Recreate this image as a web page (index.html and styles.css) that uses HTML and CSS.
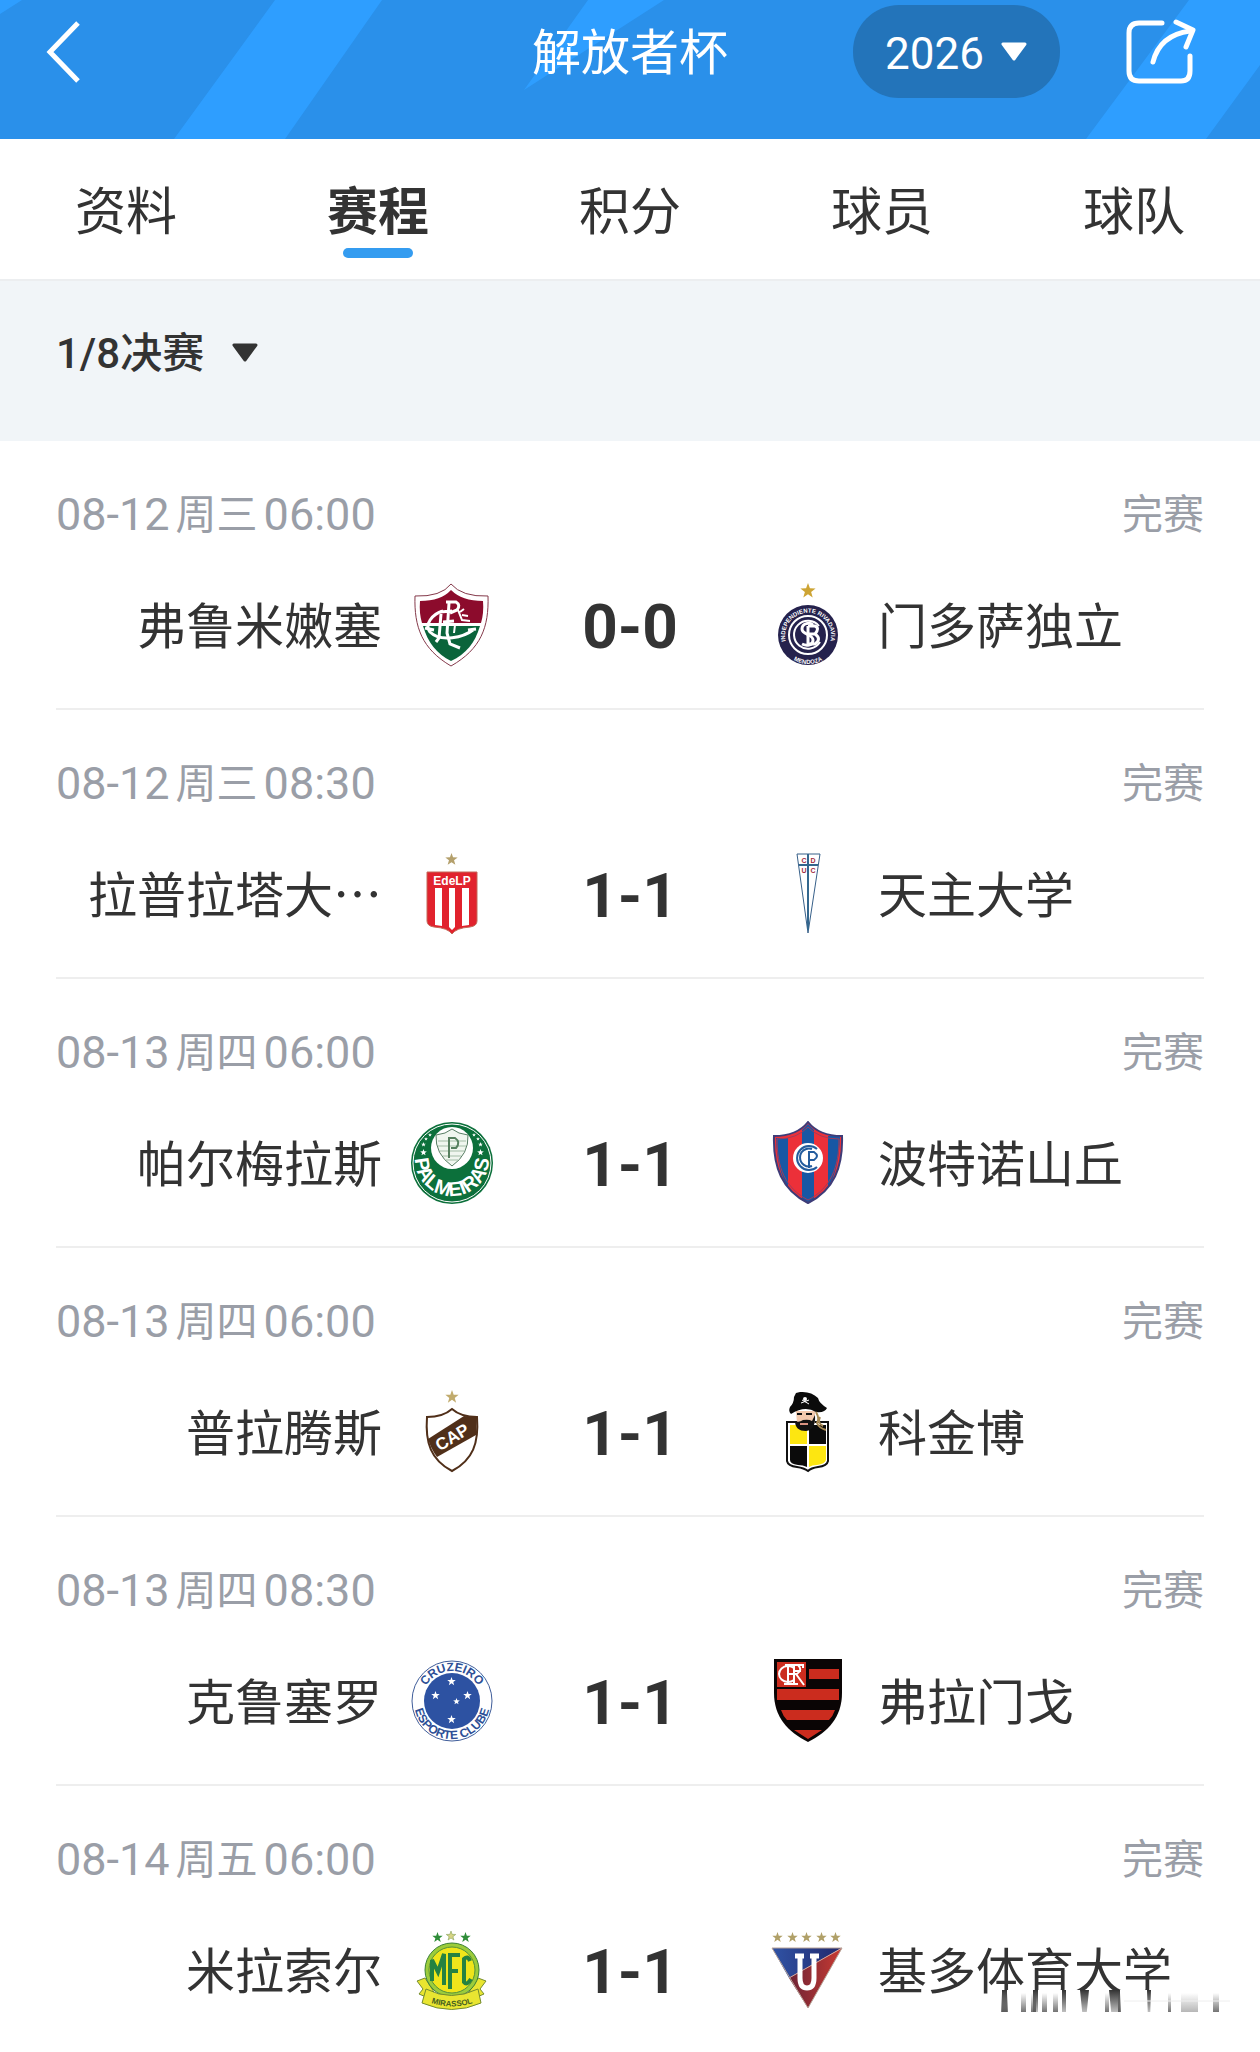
FILE: index.html
```
<!DOCTYPE html>
<html lang="zh-CN">
<head>
    <meta charset="UTF-8" />
    <meta name="viewport" content="width=device-width, initial-scale=1" />
    <title>解放者杯</title>
    <link rel="stylesheet" href="styles.css">
</head>
<body>
    <svg class="defs" aria-hidden="true">
        <symbol id="star" viewBox="-10 -10 20 20">
            <path d="M0-10 2.4-3.3 9.5-3.1 3.9 1.3 5.9 8.1 0 4.1-5.9 8.1-3.9 1.3-9.5-3.1-2.4-3.3Z" />
        </symbol>
        <symbol id="caret" viewBox="0 0 28 20">
            <path d="M3 2H25L14 17Z" fill="currentColor" stroke="currentColor" stroke-width="3" stroke-linejoin="round" />
        </symbol>
    </svg>

    <header class="topbar">
        <svg class="topbar-bg" viewBox="0 0 1260 139" preserveAspectRatio="none" aria-hidden="true">
            <path d="M0 0H22L0 14ZM275 0H382L285 139H174ZM588 0H664L524 90ZM1189 0H1260V65L1206 139H1086Z" fill="#2e9eff" />
        </svg>
        <a class="back" href="#" aria-label="返回">
            <svg width="36" height="66" viewBox="0 0 36 66"><path d="M32 4 4 33 32 62" fill="none" stroke="#fff" stroke-width="5" /></svg>
        </a>
        <h1>解放者杯</h1>
        <div class="actions">
            <div class="year">
                <select aria-label="年份">
                    <option>2026</option>
                    <option>2025</option>
                </select>
                <svg class="caret"><use href="#caret" /></svg>
            </div>
            <button class="share" type="button" aria-label="分享">
                <svg width="70" height="66" viewBox="0 0 70 66" fill="none" stroke="#fff" stroke-width="5" stroke-linecap="round" stroke-linejoin="round">
                    <path d="M36 4H13Q3 4 3 14V52Q3 62 13 62H55Q64 62 64 52V37" />
                    <path d="M27 43C31 27 42 15 64 12" />
                    <path d="M50 3 67 11 60 28" />
                </svg>
            </button>
        </div>
    </header>

    <nav class="tabs">
        <a href="#">资料</a>
        <a href="#" class="active">赛程</a>
        <a href="#">积分</a>
        <a href="#">球员</a>
        <a href="#">球队</a>
    </nav>

    <div class="filter">
        <select aria-label="阶段">
            <option>1/8决赛</option>
        </select>
        <svg class="caret"><use href="#caret" /></svg>
    </div>

    <main class="matches">
        <section class="match">
            <div class="meta"><span class="time">08-12<span class="day">周三</span>06:00</span><span>完赛</span></div>
            <div class="teams">
                <span class="name home">弗鲁米嫩塞</span>
                <svg class="logo" viewBox="0 0 84 84">
                    <path d="M41 1Q31 14 5 13C4 44 12 66 41 83 71 66 79 44 78 13Q52 14 41 1Z" fill="#fff" stroke="#84394a" />
                    <path d="M41 7Q31 18 10 18 9 30 12 40H71Q74 30 73 18 52 18 41 7Z" fill="#8c0b2c" />
                    <path d="M13 43H70C65 60 56 71 41 78 27 71 18 60 13 43Z" fill="#0a643b" />
                    <g fill="none" stroke="#fff" stroke-width="3">
                        <path d="M33 28C22 31 14 42 20 49 31 60 54 54 63 47M15 45 24 47M58 47 66 46" />
                        <path d="M36 19H46Q51 22 47 27L40 30M39 20 37 50 40 61 50 65M30 29 42 28M33 39 44 38M31 31 29 55 26 59" />
                        <path d="M48 27 52 37 60 38M50 29 54 26M52 32 58 33M45 42 44 50" stroke-width="2" />
                    </g>
                </svg>
                <strong class="score">0-0</strong>
                <svg class="logo" viewBox="0 0 84 84">
                    <use href="#star" x="34" y="0" width="16" height="16" fill="#cda434" />
                    <circle cx="42" cy="52" r="30" fill="#25224d" />
                    <g fill="none" stroke="#fff" stroke-width="2">
                        <circle cx="42" cy="52" r="19" />
                        <path d="M54 59A14 14 0 1 1 53 43" />
                        <path d="M47 42C44 39 36 40 36 46S47 51 47 57 40 63 36 61" stroke-width="3" />
                        <path d="M42 43V62M42 43H49Q54 45 49 51H42M49 51Q56 56 49 61H42" stroke-width="3" />
                    </g>
                    <path id="ind" d="M24 67A23 23 0 1 1 60 67" fill="none" />
                    <path id="men" d="M19 69A28 28 0 0 0 65 69" fill="none" />
                    <text class="crest-text" font-size="6" fill="#fff"><textPath href="#ind" startOffset="50%" text-anchor="middle">INDEPENDIENTE RIVADAVIA</textPath></text>
                    <text class="crest-text" font-size="6" fill="#fff"><textPath href="#men" startOffset="50%" text-anchor="middle">MENDOZA</textPath></text>
                </svg>
                <span class="name">门多萨独立</span>
            </div>
        </section>

        <section class="match">
            <div class="meta"><span class="time">08-12<span class="day">周三</span>08:30</span><span>完赛</span></div>
            <div class="teams">
                <span class="name home">拉普拉塔大…</span>
                <svg class="logo" viewBox="0 0 84 84">
                    <use href="#star" x="35" y="1" width="13" height="13" fill="#b4a06c" />
                    <path d="M17 20H67V69Q67 74 60 75 46 76 42 82 38 76 24 75 17 74 17 69Z" fill="#e1222d" stroke="#c4695a" />
                    <path d="M25 36H32V74L25 73ZM39 36H45V75L42 78 39 75ZM52 36H59V73L52 74Z" fill="#fff" />
                    <text class="crest-text" x="42" y="33" font-size="12" fill="#fff" text-anchor="middle">EdeLP</text>
                </svg>
                <strong class="score">1-1</strong>
                <svg class="logo" viewBox="0 0 84 84">
                    <path d="M31 2H54L42 81Z" fill="#fff" stroke="#376089" />
                    <path d="M42 2V78M33 13H52" fill="none" stroke="#33678e" stroke-width="2" />
                    <g class="crest-text" font-size="7" fill="#a12c41" text-anchor="middle">
                        <text x="38" y="11">C</text>
                        <text x="47" y="11">D</text>
                        <text x="38" y="21">U</text>
                        <text x="47" y="21">C</text>
                    </g>
                </svg>
                <span class="name">天主大学</span>
            </div>
        </section>

        <section class="match">
            <div class="meta"><span class="time">08-13<span class="day">周四</span>06:00</span><span>完赛</span></div>
            <div class="teams">
                <span class="name home">帕尔梅拉斯</span>
                <svg class="logo" viewBox="0 0 84 84">
                    <circle cx="42" cy="42" r="41" fill="#0c703b" />
                    <circle cx="42" cy="42" r="39" fill="none" stroke="#fff" />
                    <circle cx="42" cy="27" r="21" fill="#fff" />
                    <path d="M42 8Q36 13 26 14 25 33 42 45 59 33 58 14 48 13 42 8Z" fill="#f0f6ef" stroke="#577d63" />
                    <path d="M28 20H56M28 25H56M30 30H54M33 35H51M36 39H48" stroke="#a3bca6" />
                    <path d="M39 37V17H45Q51 21 46 27H41" fill="none" stroke="#56805f" stroke-width="2" />
                    <g fill="#fff">
                        <use href="#star" x="10" y="28" width="7" height="7" />
                        <use href="#star" x="11" y="21" width="5" height="5" />
                        <use href="#star" x="14" y="16" width="4" height="4" />
                        <use href="#star" x="18" y="12" width="4" height="4" />
                        <use href="#star" x="67" y="28" width="7" height="7" />
                        <use href="#star" x="68" y="21" width="5" height="5" />
                        <use href="#star" x="66" y="16" width="4" height="4" />
                        <use href="#star" x="62" y="12" width="4" height="4" />
                    </g>
                    <path id="pal" d="M5 38A37 37 0 1 0 79 38" fill="none" />
                    <text class="crest-text" font-size="20" fill="#fff"><textPath href="#pal" startOffset="50%" text-anchor="middle">PALMEIRAS</textPath></text>
                </svg>
                <strong class="score">1-1</strong>
                <svg class="logo" viewBox="0 0 84 84">
                    <path d="M42 1Q31 15 8 15C7 46 16 69 42 82 68 69 77 46 76 15Q53 15 42 1Z" fill="#ec3039" />
                    <path d="M10 17H22V66Q11 50 10 17ZM36 9 42 3 48 9V79L42 82 36 79ZM62 15H74Q73 50 62 66Z" fill="#1857a4" />
                    <path d="M42 1Q31 15 8 15C7 46 16 69 42 82 68 69 77 46 76 15Q53 15 42 1Z" fill="none" stroke="#3e3c78" stroke-width="2" />
                    <path d="M42 6Q31 18 11 18C11 46 19 67 42 79 65 67 73 46 73 18Q53 18 42 6Z" fill="none" stroke="#a13b5b" />
                    <circle cx="42" cy="37" r="15" fill="#fff" />
                    <g fill="none" stroke="#235c9d" stroke-width="2">
                        <path d="M51 28A12 12 0 1 0 51 46M46 28A9 9 0 1 0 46 45" />
                        <path d="M43 47V31H48Q54 35 48 39H43" />
                    </g>
                </svg>
                <span class="name">波特诺山丘</span>
            </div>
        </section>

        <section class="match">
            <div class="meta"><span class="time">08-13<span class="day">周四</span>06:00</span><span>完赛</span></div>
            <div class="teams">
                <span class="name home">普拉腾斯</span>
                <svg class="logo" viewBox="0 0 84 84">
                    <use href="#star" x="35" y="0" width="14" height="14" fill="#c1ab6d" />
                    <path d="M42 19Q33 27 17 27C15 53 21 70 42 81 63 70 69 53 67 27Q51 27 42 19Z" fill="#fff" />
                    <path d="M18 49 54 26 67 27 66 45 27 67Q21 59 18 49Z" fill="#502f19" />
                    <path d="M42 19Q33 27 17 27C15 53 21 70 42 81 63 70 69 53 67 27Q51 27 42 19Z" fill="none" stroke="#502f19" stroke-width="2" />
                    <text class="crest-text" x="42" y="53" font-size="17" fill="#fff" text-anchor="middle" transform="rotate(-31 42 47)">CAP</text>
                </svg>
                <strong class="score">1-1</strong>
                <svg class="logo" viewBox="0 0 84 84">
                    <path d="M21 32H62V71Q61 76 52 77 45 78 42 81 38 78 31 77 22 76 21 71Z" fill="#fff" stroke="#111" stroke-width="2" />
                    <path d="M24 35H41V54H24ZM43 56H60V70Q59 74 51 75 46 75 43 77Z" fill="#fde611" />
                    <path d="M43 35H60V54H43ZM24 56H41V77Q37 75 32 75 24 74 24 70Z" fill="#0b0b0b" />
                    <path d="M30 21H49V33L41 37 31 33Z" fill="#f3c9ad" />
                    <path d="M29 31Q33 33 37 30 43 29 46 31L49 25Q50 40 40 41 29 41 29 31Z" fill="#111" />
                    <path d="M31 24H36M40 24H46" stroke="#111" stroke-width="2" />
                    <path d="M34 34H42" stroke="#d99281" stroke-width="2" />
                    <path d="M30 3 34 2Q45 1 52 8 53 13 61 18 59 23 50 22 39 15 25 24 22 21 24 17 28 13 28 7Z" fill="#0b0b0b" />
                    <path d="M50 22Q54 29 51 33 53 38 60 40M54 27Q51 33 57 36" fill="none" stroke="#a88a55" stroke-width="2" />
                    <circle cx="39" cy="9" r="2" fill="#fff" />
                    <path d="M35 13 43 10M36 10 43 14" stroke="#fff" />
                </svg>
                <span class="name">科金博</span>
            </div>
        </section>

        <section class="match">
            <div class="meta"><span class="time">08-13<span class="day">周四</span>08:30</span><span>完赛</span></div>
            <div class="teams">
                <span class="name home">克鲁塞罗</span>
                <svg class="logo" viewBox="0 0 84 84">
                    <circle cx="42" cy="42" r="40" fill="#fff" stroke="#3f5d9a" />
                    <circle cx="42" cy="42" r="28" fill="#2d52a2" />
                    <g fill="#fff">
                        <use href="#star" x="37" y="18" width="9" height="9" />
                        <use href="#star" x="21" y="32" width="9" height="9" />
                        <use href="#star" x="53" y="32" width="9" height="9" />
                        <use href="#star" x="43" y="39" width="7" height="7" />
                        <use href="#star" x="37" y="56" width="9" height="9" />
                    </g>
                    <path id="cru" d="M12 42A30 30 0 0 1 72 42" fill="none" />
                    <path id="esp" d="M6 30A38 38 0 1 0 78 30" fill="none" />
                    <text class="crest-text" font-size="12" fill="#2d4f96"><textPath href="#cru" startOffset="50%" text-anchor="middle">CRUZEIRO</textPath></text>
                    <text class="crest-text" font-size="12" fill="#2d4f96"><textPath href="#esp" startOffset="50%" text-anchor="middle">ESPORTE CLUBE</textPath></text>
                </svg>
                <strong class="score">1-1</strong>
                <svg class="logo" viewBox="0 0 84 84">
                    <path d="M8 0H76V34C76 58 62 73 42 83 22 73 8 58 8 34Z" fill="#0a0505" />
                    <path d="M11 3H40V28H11ZM43 10H73V20H43ZM11 30H73V41H11ZM15 51H69Q67 57 63 61H21Q17 57 15 51ZM28 71H56L42 80Z" fill="#cb2c1e" />
                    <g fill="none" stroke="#fff" stroke-width="2">
                        <path d="M28 9A9 8 0 1 0 28 21" />
                        <path d="M22 6V25M19 6H32Q37 11 31 15H22M30 15 38 26M28 6V26M37 9V6H28M28 12H35M18 25H32" />
                    </g>
                </svg>
                <span class="name">弗拉门戈</span>
            </div>
        </section>

        <section class="match">
            <div class="meta"><span class="time">08-14<span class="day">周五</span>06:00</span><span>完赛</span></div>
            <div class="teams">
                <span class="name home">米拉索尔</span>
                <svg class="logo" viewBox="0 0 84 84">
                    <use href="#star" x="22" y="4" width="11" height="11" fill="#2f8d39" />
                    <use href="#star" x="36" y="3" width="10" height="10" fill="#d6d484" stroke="#74964b" />
                    <use href="#star" x="50" y="4" width="11" height="11" fill="#2f8d39" />
                    <path d="M7 53 15 50 24 64 16 69 9 66 13 61ZM76 53 68 50 59 64 67 69 74 66 70 61Z" fill="#e9e531" stroke="#748c2e" />
                    <circle cx="42" cy="42" r="27" fill="#9ccc3b" stroke="#3b8136" />
                    <circle cx="42" cy="42" r="23" fill="#efe51b" stroke="#54923a" />
                    <path d="M16 61Q41 74 68 61L71 75Q42 88 12 75Z" fill="#e9e531" stroke="#748c2e" />
                    <g fill="none" stroke="#258241" stroke-width="4">
                        <path d="M22 53V32L28 44 34 26V57M40 61V27H50M40 43H48M60 33Q58 27 54 31V54Q57 58 61 51" />
                    </g>
                    <path id="mir" d="M14 72Q42 85 70 72" fill="none" />
                    <text class="crest-text" font-size="8" fill="#455f20"><textPath href="#mir" startOffset="50%" text-anchor="middle">MIRASSOL</textPath></text>
                </svg>
                <strong class="score">1-1</strong>
                <svg class="logo" viewBox="0 0 84 84">
                    <g fill="#b0a068">
                        <use href="#star" x="6" y="4" width="11" height="11" />
                        <use href="#star" x="21" y="4" width="11" height="11" />
                        <use href="#star" x="35" y="4" width="11" height="11" />
                        <use href="#star" x="50" y="4" width="11" height="11" />
                        <use href="#star" x="64" y="4" width="11" height="11" />
                    </g>
                    <linearGradient id="ldu-blue"><stop stop-color="#3053a5" /><stop offset="1" stop-color="#21286c" /></linearGradient>
                    <linearGradient id="ldu-red"><stop stop-color="#6d2335" /><stop offset="1" stop-color="#c93a32" /></linearGradient>
                    <path d="M6 20H76L23 50Z" fill="url(#ldu-blue)" />
                    <path d="M76 20 42 80 23 50Z" fill="url(#ldu-red)" />
                    <path d="M23 50 76 20" stroke="#d3a59a" />
                    <path d="M6 20H76L42 80Z" fill="none" stroke="#b6a196" />
                    <path d="M34 29V50Q34 60 41 60T48 50V29M29 28H38M44 28H53" fill="none" stroke="#fff" stroke-width="5" />
                </svg>
                <span class="name">基多体育大学</span>
            </div>
            <svg class="mark" viewBox="0 0 236 44" aria-hidden="true">
                <linearGradient id="fade-down" x2="0" y2="1"><stop stop-color="#333" /><stop offset="1" stop-color="#333" stop-opacity="0" /></linearGradient>
                <linearGradient id="fade-up" x2="0" y2="1"><stop stop-color="#222" stop-opacity="0" /><stop offset="1" stop-color="#222" /></linearGradient>
                <path d="M0 0H236V44H0Z" fill="#fff" />
                <path d="M2 0H7V32H2ZM33 0H38V32H33ZM62 0H66V30H62ZM80 0H89L86 30H83ZM109 0H120V30H112ZM147 0H151L150 30H148Z" fill="url(#fade-down)" />
                <path d="M1 3H8V32H1ZM21 3H26V32H21ZM31 3H36V32H31ZM42 3H47V32H42ZM53 3H58V32H53ZM105 3H109V32H105ZM118 3H121V33H118ZM168 3H171V32H168ZM213 3H219V32H213Z" fill="url(#fade-up)" />
                <path d="M181 3H198V32H181Z" fill="url(#fade-up)" opacity="0.5" />
                <path d="M73 32Q86 42 98 32" fill="none" stroke="#111" stroke-width="2" />
                <path d="M124 11H230M124 29H230" stroke="#eee" />
            </svg>
        </section>
    </main>
</body>
</html>
```
FILE: styles.css
```
/* Reset and base */
* {
    box-sizing: border-box;
}
body {
    margin: 0;
    background: #fff;
    color: #333;
    font-family: Roboto, 'Noto Sans CJK SC', sans-serif;
    font-size: 40px;
}
a {
    color: inherit;
    text-decoration: none;
}
select,
button {
    appearance: none;
    border: none;
    background: none;
    margin: 0;
    padding: 0;
    color: inherit;
    font-family: inherit;
}
svg {
    display: block;
}
.defs {
    position: absolute;
    width: 0;
    height: 0;
}
.caret {
    width: 28px;
    height: 20px;
    pointer-events: none;
}

/* Top bar */
.topbar {
    position: relative;
    display: grid;
    grid-template-columns: 1fr auto 1fr;
    align-items: center;
    padding: 5px 64px 41px;
    background: #2a90ea;
    color: #fff;
}
.topbar-bg {
    position: absolute;
    inset: 0;
    width: 100%;
    height: 100%;
}
.back,
.topbar h1,
.actions {
    position: relative;
}
.back {
    margin-left: -18px;
}
.topbar h1 {
    margin: 0;
    padding-top: 4px;
    font-size: 49px;
    font-weight: 400;
    line-height: 60px;
}
.actions {
    display: flex;
    align-items: center;
    justify-content: flex-end;
    gap: 66px;
}
.year {
    position: relative;
}
.year select {
    height: 93px;
    padding: 4px 76px 0 32px;
    border-radius: 46px;
    background: #2374ba;
    font-size: 44px;
}
.year .caret {
    position: absolute;
    right: 32px;
    top: 37px;
}

/* Tabs */
.tabs {
    display: flex;
    border-bottom: 2px solid #eceef0;
}
.tabs a {
    flex: 1;
    display: flex;
    flex-direction: column;
    align-items: center;
    padding-top: 39px;
    height: 140px;
    font-size: 51px;
    line-height: 70px;
}
.tabs .active {
    font-weight: 700;
}
.tabs .active::after {
    content: "";
    width: 70px;
    height: 10px;
    border-radius: 5px;
    background: #349cf0;
}

/* Stage filter */
.filter {
    display: flex;
    align-items: center;
    gap: 26px;
    padding: 42px 56px 58px;
    background: #f1f5f8;
}
.filter select {
    height: 60px;
    font-size: 42px;
    font-weight: 500;
}

/* Match list */
.matches {
    padding: 0 56px;
}
.match {
    position: relative;
    padding: 44px 0 41px;
    border-bottom: 2px solid #eee;
}
.match:last-child {
    padding-bottom: 0;
    border-bottom: none;
}
.meta {
    display: flex;
    justify-content: space-between;
    margin-bottom: 38px;
    color: #9a9ea7;
    font-size: 41px;
    line-height: 60px;
}
.time {
    display: flex;
    font-size: 45px;
}
.day {
    margin: 0 6px;
    font-size: 41px;
}
.teams {
    display: grid;
    grid-template-columns: 1fr 84px 216px 84px 1fr;
    align-items: center;
    column-gap: 28px;
}
.name {
    padding-bottom: 4px;
    font-family: 'Noto Sans CJK SC', sans-serif;
    font-size: 49px;
    line-height: 60px;
    white-space: nowrap;
}
.home {
    text-align: right;
}
.logo {
    width: 84px;
    height: 84px;
}
.score {
    padding-top: 4px;
    font-size: 62px;
    line-height: 80px;
    text-align: center;
}
.crest-text {
    font-family: 'Liberation Sans', sans-serif;
    font-weight: 700;
}

/* Faded mark over the last row */
.mark {
    position: absolute;
    right: -32px;
    bottom: -22px;
    width: 236px;
    height: 44px;
}
```
